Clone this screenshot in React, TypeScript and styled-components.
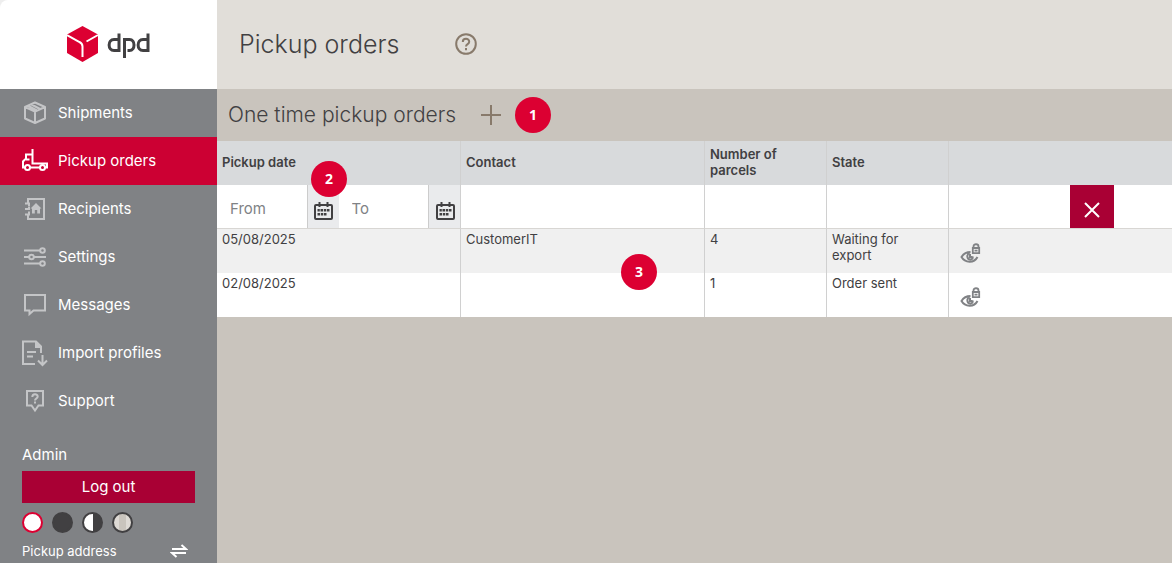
import React from "react";
import styled, { createGlobalStyle, css } from "styled-components";

const Global = createGlobalStyle`
  * { box-sizing: border-box; }
  html, body, #root { height: 100%; }
  body {
    margin: 0;
    background: #ffffff;
    color: #414042;
    font-family: Inter, "Noto Sans", sans-serif;
    font-size: 13px;
    overflow: hidden;
  }
  #root { padding: 0 4px 1px 0; }
  button, input { font-family: inherit; }
`;

const Page = styled.div`
  display: grid;
  grid-template-columns: 217px minmax(0, 1fr);
  height: 100%;
  overflow: hidden;
  background: #c9c4bd;
`;

const Sidebar = styled.aside`
  background: #808285;
  color: #ffffff;
`;

const Brand = styled.div`
  background: #eeeeee;
`;

const LogoLink = styled.a`
  display: flex;
  align-items: center;
  justify-content: center;
  height: 89px;
  background: #ffffff;
  border-top-left-radius: 8px;
`;

const NavLink = styled.a<{ $active?: boolean }>`
  display: flex;
  align-items: center;
  gap: 8px;
  height: 48px;
  padding-left: 20px;
  color: #ffffff;
  font-size: 15px;
  line-height: 20px;
  text-decoration: none;
  background: ${(p) => (p.$active ? "#cc0033" : "transparent")};
  svg { color: ${(p) => (p.$active ? "#ffffff" : "#c4c5c7")}; }
`;

const Account = styled.section`
  display: flex;
  flex-direction: column;
  padding: 20px 22px 0;
  line-height: 20px;
`;

const UserName = styled.span`
  font-size: 15px;
`;

const LogoutButton = styled.button`
  height: 32px;
  margin-top: 6px;
  padding: 0 0 2px;
  border: 0;
  border-radius: 0;
  background: #a90034;
  color: #ffffff;
  font-size: 15px;
`;

const Themes = styled.div`
  display: flex;
  gap: 9px;
  margin-top: 9px;
`;

const ThemeButton = styled.button<{ $ring: string; $fill: string }>`
  width: 21px;
  height: 21px;
  padding: 0;
  border: 2px solid ${(p) => p.$ring};
  border-radius: 50%;
  background: ${(p) => p.$fill};
  background-origin: border-box;
`;

const AddressRow = styled.div`
  display: flex;
  align-items: center;
  justify-content: space-between;
  margin-top: 8px;
  padding-right: 7px;
`;

const IconButton = styled.button<{ $tone?: string }>`
  display: flex;
  padding: 0;
  border: 0;
  background: transparent;
  color: ${(p) => p.$tone ?? "inherit"};
`;

const Header = styled.header`
  display: flex;
  align-items: center;
  gap: 56px;
  height: 89px;
  padding: 0 22px 2px;
  background: #e1ded9;
`;

const Title = styled.h1`
  margin: 0;
  font-size: 25px;
  font-weight: 300;
  line-height: 32px;
`;

const SectionBar = styled.div`
  display: flex;
  align-items: center;
  gap: 14px;
  height: 52px;
  padding-left: 11px;
`;

const Subtitle = styled.h2`
  margin: 0 11px 0 0;
  font-size: 21px;
  font-weight: 300;
  line-height: 28px;
`;

const Step = styled.span`
  display: flex;
  align-items: center;
  justify-content: center;
  width: 36px;
  height: 36px;
  border-radius: 50%;
  background: #dc0032;
  color: #ffffff;
  font-family: "Open Sans", sans-serif;
  font-size: 14px;
  font-weight: 700;
  line-height: 20px;
`;

const FloatingStep = styled(Step)<{ $left: number; $top: number }>`
  position: absolute;
  left: ${(p) => p.$left}px;
  top: ${(p) => p.$top}px;
`;

const TableArea = styled.div`
  position: relative;
`;

const Table = styled.table`
  width: 100%;
  table-layout: fixed;
  border-collapse: separate;
  border-spacing: 0;
  background: #ffffff;
`;

const Col = styled.col<{ $width?: number }>`
  ${(p) => p.$width && css`width: ${p.$width}px;`}
`;

const divider = css`
  &:not(:last-child) { border-right: 1px solid #d0d0d0; }
`;

const HeadCell = styled.th`
  ${divider}
  height: 44px;
  padding: 0 5px 2px;
  background: #d8dadc;
  font-size: 13px;
  font-weight: 600;
  line-height: 16px;
  text-align: left;
`;

const FilterCell = styled.td`
  ${divider}
  height: 44px;
  padding: 0;
  border-bottom: 1px solid #d8d6d3;
`;

const DateRange = styled.div`
  display: grid;
  grid-template-columns: 1fr 1fr;
`;

const DateField = styled.div`
  display: grid;
  grid-template-columns: minmax(0, 1fr) 31px;
  height: 43px;
`;

const DateInput = styled.input`
  width: 100%;
  padding: 3px 0 0 13px;
  border: 0;
  border-right: 1px solid #cccccc;
  color: #414042;
  background: #ffffff;
  font-size: 15px;
  &::placeholder { color: #808285; opacity: 1; }
`;

const CalendarButton = styled.button`
  display: flex;
  align-items: center;
  justify-content: center;
  padding: 9px 0 0;
  border: 0;
  background: #eaebed;
  color: #414042;
`;

const ClearButton = styled.button`
  display: flex;
  align-items: center;
  justify-content: center;
  width: 44px;
  height: 43px;
  margin-left: 121px;
  padding: 6px 0 0;
  border: 0;
  background: #a90034;
  color: #ffffff;
`;

const Row = styled.tr`
  &:nth-child(even) { background: #f0f0f0; }
`;

const Cell = styled.td`
  ${divider}
  height: 44px;
  padding: 2px 12px 2px 5px;
  vertical-align: top;
  font-size: 13px;
  line-height: 16px;
`;

const ActionCell = styled(Cell)`
  padding: 14px 11px 0;
  color: #808285;
`;

type IconProps = { size?: number; children: React.ReactNode; w?: number };
const Icon = ({ size = 30, w = 2, children }: IconProps) => (
  <svg width={size} height={size} viewBox={`0 0 ${size} ${size}`} fill="none" stroke="currentColor" strokeWidth={w} aria-hidden="true">
    {children}
  </svg>
);

const BoxIcon = () => (
  <Icon>
    <path d="M15 4.500 25 9V20.500L15 25 5 20.500V9Z M5 9 15 13.500 25 9M15 13.500V25M11.500 6.500 20 11M8.500 8 17 12.500" strokeLinejoin="round" />
  </Icon>
);
const TruckIcon = () => (
  <Icon>
    <path d="M5 21.500H3V15.500L6 12.500V8.500H12.500V17.500H27V21.500H25M12.500 3V17.500M10 21.500H20M6 13.500H9.500" />
    <circle cx="7.500" cy="21.500" r="2.500" />
    <circle cx="22.500" cy="21.500" r="2.500" />
  </Icon>
);
const BookIcon = () => (
  <Icon>
    <path d="M8 9.500V5H24V25H8V20.500M5 9.500H9V12M5 15H9V12.500M5 20.500H9V17.500" />
    <path d="M16 9 21.500 14.500H20V19.500H17.200V16H14.800V19.500H12V14.500H10.500Z" fill="currentColor" stroke="none" />
  </Icon>
);
const SlidersIcon = () => (
  <Icon>
    <path d="M4 8.500H20M4 15H9M14 15H26M4 21.500H20" />
    <circle cx="22.500" cy="8.500" r="2.300" />
    <circle cx="11.500" cy="15" r="2.300" />
    <circle cx="22.500" cy="21.500" r="2.300" />
  </Icon>
);
const MessageIcon = () => (
  <Icon>
    <path d="M5 5H25V20.500H13.500L9.500 24V20.500H5Z" />
  </Icon>
);
const ImportIcon = () => (
  <Icon>
    <path d="M15 26H3V3.500H16L21 8.500V15M7 14H16M7 18.500H13M22.500 17V26.500M18 22.500 22.500 27 27 22.500" />
    <path d="M15 3.500V10H21V8.500L16 3.500Z" fill="currentColor" stroke="none" />
  </Icon>
);
const SupportIcon = () => (
  <Icon>
    <path d="M7 5H23V19.500H18.500L15 24.500 11.500 19.500H7Z" />
    <path d="M12.300 11C12.300 7.500 17.700 7.500 17.700 10.500 17.700 12.500 15 12.500 15 14.500M15 15.500V17.500" />
  </Icon>
);
const HelpIcon = () => (
  <Icon size={22}>
    <circle cx="11" cy="11" r="9.800" />
    <path d="M7.800 9C7.800 4.800 14.200 4.800 14.200 8.800 14.200 11.200 11 11 11 13.500M11 15V17.300" />
  </Icon>
);
const PlusIcon = () => (
  <Icon size={20}>
    <path d="M10 0V20M0 10H20" />
  </Icon>
);
const CalendarIcon = () => (
  <Icon size={20}>
    <rect x="2" y="4" width="17" height="14" rx="1" />
    <path d="M6.500 1V6M14.500 1V6" />
    <path d="M7.500 8H10V10.500H7.500ZM10.800 8H13.300V10.500H10.800ZM14 8H16.500V10.500H14ZM4.500 12H7V14.500H4.500ZM7.800 12H10.300V14.500H7.800ZM11 12H13.500V14.500H11ZM4.500 8H6.800V10.500H4.500Z" fill="currentColor" stroke="none" />
  </Icon>
);
const CrossIcon = () => (
  <Icon size={16}>
    <path d="M1 1 15 15M15 1 1 15" />
  </Icon>
);
const SwapIcon = () => (
  <Icon size={18}>
    <path d="M2 7H16L11.500 3M16 11H2L6.500 15" />
  </Icon>
);
const ViewIcon = () => (
  <Icon size={22} w={2}>
    <path d="M10.500 9C6 9 3 11.500 1.500 14 5 20 14 20.500 17.500 14M10 9.500C5.500 12 7.500 16.800 10.500 16.500 12.500 16.300 13 15 12.500 13.500M10 11V14H12.500" />
    <path d="M13.500 4.500V3.500C13.500.5 18.500.5 18.500 3.500V4.500M12.800 5H19.200V10.200H12.800ZM14.500 7.700H17.500" strokeWidth="1.800" />
  </Icon>
);

const DpdLogo = () => (
  <svg width="84" height="38" viewBox="1 1 84 38" role="img" aria-label="dpd">
    <path d="M16.500 1 32 9.500V28L16.500 37 1 28V9.500Z" fill="#dc0032" />
    <path d="M1 10 13.500 17Q16.500 18.500 16.500 21.500V32M20.500 16.500 32 10" fill="none" stroke="#ffffff" strokeWidth="2" />
    <g fill="none" stroke="#414042" strokeWidth="3">
      <path d="M53 8.500V25.500H48C41.500 25.500 41.500 14.500 48 14.500H53" />
      <path d="M58.500 33V14.500H63.500C69.500 14.500 69.500 25.500 63.500 25.500H61.500" />
      <path d="M82 8.500V25.500H77C70.500 25.500 70.500 14.500 77 14.500H82" />
    </g>
  </svg>
);

const navigation = [
  { label: "Shipments", icon: <BoxIcon /> },
  { label: "Pickup orders", icon: <TruckIcon />, active: true },
  { label: "Recipients", icon: <BookIcon /> },
  { label: "Settings", icon: <SlidersIcon /> },
  { label: "Messages", icon: <MessageIcon /> },
  { label: "Import profiles", icon: <ImportIcon /> },
  { label: "Support", icon: <SupportIcon /> },
];

const themes = [
  { name: "Light theme", ring: "#dc0032", fill: "#ffffff" },
  { name: "Dark theme", ring: "#414042", fill: "#414042" },
  { name: "High contrast theme", ring: "#414042", fill: "linear-gradient(90deg, #ffffff 50%, #414042 50%)" },
  { name: "Warm theme", ring: "#414042", fill: "linear-gradient(90deg, #dedad5 35%, #c9c4bd 35% 65%, #dedad5 65%)" },
];

const orders = [
  { date: "05/08/2025", contact: "CustomerIT", parcels: 4, state: "Waiting for export" },
  { date: "02/08/2025", contact: "", parcels: 1, state: "Order sent" },
];

export default function App() {
  return (
    <>
      <Global />
      <Page>
        <Sidebar>
          <Brand>
            <LogoLink href="#"><DpdLogo /></LogoLink>
          </Brand>
          <nav>
            {navigation.map((item) => (
              <NavLink href="#" key={item.label} $active={item.active}>{item.icon}{item.label}</NavLink>
            ))}
          </nav>
          <Account>
            <UserName>Admin</UserName>
            <LogoutButton>Log out</LogoutButton>
            <Themes>
              {themes.map((t) => <ThemeButton key={t.name} aria-label={t.name} $ring={t.ring} $fill={t.fill} />)}
            </Themes>
            <AddressRow>Pickup address<IconButton aria-label="Change pickup address"><SwapIcon /></IconButton></AddressRow>
          </Account>
        </Sidebar>
        <main>
          <Header>
            <Title>Pickup orders</Title>
            <IconButton aria-label="Help" $tone="#887a6b"><HelpIcon /></IconButton>
          </Header>
          <SectionBar>
            <Subtitle>One time pickup orders</Subtitle>
            <IconButton aria-label="Add pickup order" $tone="#887a6b"><PlusIcon /></IconButton>
            <Step>1</Step>
          </SectionBar>
          <TableArea>
            <Table>
              <colgroup>
                <Col $width={244} /><Col $width={244} /><Col $width={122} /><Col $width={122} /><Col />
              </colgroup>
              <thead>
                <tr>
                  <HeadCell>Pickup date</HeadCell>
                  <HeadCell>Contact</HeadCell>
                  <HeadCell>Number of parcels</HeadCell>
                  <HeadCell>State</HeadCell>
                  <HeadCell />
                </tr>
              </thead>
              <tbody>
                <tr>
                  <FilterCell>
                    <DateRange>
                      {["From", "To"].map((label) => (
                        <DateField key={label}>
                          <DateInput placeholder={label} aria-label={label} />
                          <CalendarButton aria-label={`${label} calendar`}><CalendarIcon /></CalendarButton>
                        </DateField>
                      ))}
                    </DateRange>
                  </FilterCell>
                  <FilterCell /><FilterCell /><FilterCell />
                  <FilterCell><ClearButton aria-label="Clear filters"><CrossIcon /></ClearButton></FilterCell>
                </tr>
                {orders.map((o) => (
                  <Row key={o.date}>
                    <Cell>{o.date}</Cell>
                    <Cell>{o.contact}</Cell>
                    <Cell>{o.parcels}</Cell>
                    <Cell>{o.state}</Cell>
                    <ActionCell><IconButton aria-label="View order"><ViewIcon /></IconButton></ActionCell>
                  </Row>
                ))}
              </tbody>
            </Table>
            <FloatingStep $left={94} $top={20}>2</FloatingStep>
            <FloatingStep $left={404} $top={113}>3</FloatingStep>
          </TableArea>
        </main>
      </Page>
    </>
  );
}
